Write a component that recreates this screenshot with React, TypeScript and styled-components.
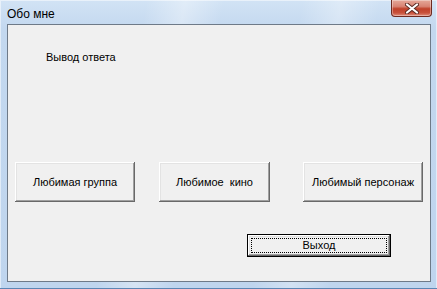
import styled, { createGlobalStyle } from 'styled-components';

const GlobalStyle = createGlobalStyle`
  html, body {
    margin: 0;
    padding: 0;
    background: #ffffff;
  }
`;

const Window = styled.div`
  width: 437px;
  height: 289px;
  box-sizing: border-box;
  display: flex;
  flex-direction: column;
  padding: 0 6px 7px 7px;
  background:
    linear-gradient(100deg, rgba(255,255,255,0) 30%, rgba(255,255,255,0.35) 38%, rgba(255,255,255,0) 46%, rgba(255,255,255,0) 62%, rgba(255,255,255,0.3) 70%, rgba(255,255,255,0) 78%),
    linear-gradient(180deg, #d2e3f5 0%, #c3d8ef 10%, #bfd5ee 100%);
  box-shadow: inset 0 -1px 0 #5c86b4, inset 0 0 0 1px rgba(255,255,255,0.5);
  font-family: "Liberation Sans", Arial, sans-serif;
`;

const TitleBar = styled.div`
  height: 24px;
  display: flex;
  align-items: flex-start;
  justify-content: space-between;
`;

const Title = styled.span`
  margin-top: 8px;
  font-size: 12px;
  line-height: 12px;
  color: #000;
`;

const CloseButton = styled.div`
  width: 41px;
  height: 17px;
  margin-right: -1px;
  box-sizing: border-box;
  display: flex;
  align-items: center;
  justify-content: center;
  border: 1px solid #6e2a20;
  border-top: none;
  border-radius: 0 0 4px 4px;
  background: linear-gradient(180deg, #e5a899 0%, #d88373 40%, #c0412a 55%, #c8513b 80%, #e08e7c 100%);
  box-shadow: inset 0 0 0 1px rgba(255,255,255,0.35);
`;

const Client = styled.div`
  flex: 1;
  display: flex;
  flex-direction: column;
  border: 1px solid #6e7a88;
  background: #f0f0f0;
  font-size: 11px;
  color: #000;
`;

const Caption = styled.div`
  margin: 25px 0 0 38px;
  line-height: 14px;
`;

const ButtonRow = styled.div`
  display: flex;
  margin-top: 98px;
`;

const ClassicButton = styled.div<{ $width: number; $left: number }>`
  width: ${(p) => p.$width}px;
  height: 40px;
  margin-left: ${(p) => p.$left}px;
  box-sizing: border-box;
  display: flex;
  align-items: center;
  justify-content: center;
  background: #f0f0f0;
  box-shadow:
    inset -1px -1px 0 #696969,
    inset 1px 1px 0 #ffffff,
    inset -2px -2px 0 #a0a0a0,
    inset 2px 2px 0 #e3e3e3;
`;

const Footer = styled.div`
  display: flex;
  margin-top: 32px;
  padding-left: 239px;
`;

const DefaultButton = styled.div`
  width: 144px;
  height: 23px;
  box-sizing: border-box;
  border: 1px solid #000;
  padding: 3px;
  display: flex;
  background: #f0f0f0;
  box-shadow:
    inset -1px -1px 0 #696969,
    inset 1px 1px 0 #ffffff,
    inset -2px -2px 0 #a0a0a0,
    inset 2px 2px 0 #e3e3e3;
`;

const FocusRect = styled.div`
  flex: 1;
  display: flex;
  align-items: center;
  justify-content: center;
  border: 1px dotted #000;
  line-height: 11px;
`;

export default function App() {
  return (
    <>
      <GlobalStyle />
      <Window>
        <TitleBar>
          <Title>Обо мне</Title>
          <CloseButton>
            <svg width="14" height="11" viewBox="0 0 14 11">
              <path d="M2 1.5 L12 9.5 M12 1.5 L2 9.5" stroke="#5a2a22" strokeWidth="4" strokeLinecap="round" />
              <path d="M2 1.5 L12 9.5 M12 1.5 L2 9.5" stroke="#ffffff" strokeWidth="2.2" strokeLinecap="round" />
            </svg>
          </CloseButton>
        </TitleBar>
        <Client>
          <Caption>Вывод ответа</Caption>
          <ButtonRow>
            <ClassicButton $width={120} $left={7}>Любимая группа</ClassicButton>
            <ClassicButton $width={111} $left={24}>Любимое&nbsp; кино</ClassicButton>
            <ClassicButton $width={120} $left={33}>Любимый персонаж</ClassicButton>
          </ButtonRow>
          <Footer>
            <DefaultButton>
              <FocusRect>Выход</FocusRect>
            </DefaultButton>
          </Footer>
        </Client>
      </Window>
    </>
  );
}
